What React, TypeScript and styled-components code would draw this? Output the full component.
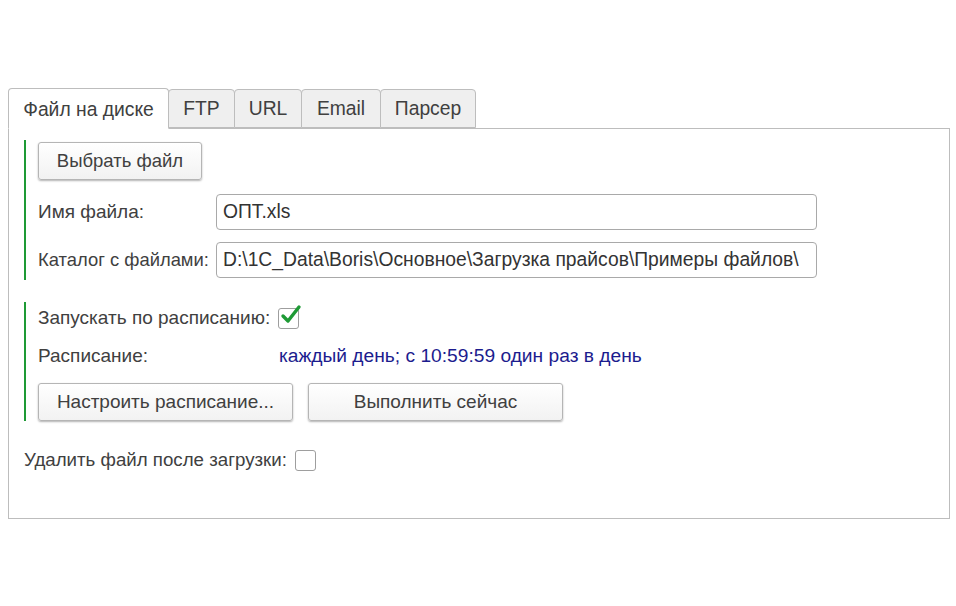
import React from "react";
import styled, { createGlobalStyle } from "styled-components";

const Global = createGlobalStyle`
  html, body { margin: 0; padding: 0; background: #ffffff; }
  body { font-family: Arial, "Liberation Sans", sans-serif; color: #404040; }
`;

const Page = styled.div`
  padding: 88px 6px 0 8px;
  width: 942px;
`;

const TabBar = styled.div`
  display: flex;
  align-items: flex-end;
  height: 40px;
  position: relative;
  z-index: 1;
`;

const Tab = styled.div<{ $active?: boolean; $w: number }>`
  box-sizing: border-box;
  width: ${(p) => p.$w}px;
  height: ${(p) => (p.$active ? 41 : 39)}px;
  margin-bottom: ${(p) => (p.$active ? -1 : 0)}px;
  margin-left: ${(p) => (p.$active ? 0 : -1)}px;
  display: flex;
  align-items: center;
  justify-content: center;
  padding-top: ${(p) => (p.$active ? 2 : 0)}px;
  font-size: 19.3px;
  color: #404040;
  background: ${(p) => (p.$active ? "#ffffff" : "#efefef")};
  border: 1px solid #bdbdbd;
  border-bottom: ${(p) => (p.$active ? "1px solid #ffffff" : "1px solid #bdbdbd")};
  border-radius: 4px 4px 0 0;
`;

const Panel = styled.div`
  box-sizing: border-box;
  height: 391px;
  border: 1px solid #bdbdbd;
  padding: 11px 15px 0 15px;
  display: flex;
  flex-direction: column;
`;

const Group = styled.div<{ $mt?: number }>`
  border-left: 2px solid #1e9a35;
  padding-left: 12px;
  margin-top: ${(p) => p.$mt ?? 0}px;
  display: flex;
  flex-direction: column;
`;

const Button = styled.div<{ $w: number; $mt?: number; $fs?: number }>`
  box-sizing: border-box;
  width: ${(p) => p.$w}px;
  height: 38px;
  margin-top: ${(p) => p.$mt ?? 0}px;
  display: flex;
  align-items: center;
  justify-content: center;
  font-size: ${(p) => p.$fs ?? 19}px;
  color: #404040;
  border: 1px solid #b5b5b5;
  border-radius: 3px;
  background: linear-gradient(#ffffff, #f2f2f2);
  box-shadow: 0 1px 2px rgba(0, 0, 0, 0.3);
`;

const FieldRow = styled.div<{ $mt: number }>`
  display: flex;
  align-items: center;
  margin-top: ${(p) => p.$mt}px;
`;

const Label = styled.div<{ $w?: number; $fs?: number }>`
  width: ${(p) => (p.$w ? `${p.$w}px` : "auto")};
  font-size: ${(p) => p.$fs ?? 19}px;
  color: #404040;
  white-space: nowrap;
`;

const Input = styled.div`
  box-sizing: border-box;
  width: 601px;
  height: 36px;
  border: 1px solid #a9a9a9;
  border-radius: 4px;
  display: flex;
  align-items: center;
  padding-left: 6px;
  font-size: 19.3px;
  color: #333333;
  white-space: nowrap;
  overflow: hidden;
`;

const Row = styled.div<{ $h: number; $mt?: number }>`
  display: flex;
  align-items: center;
  height: ${(p) => p.$h}px;
  margin-top: ${(p) => p.$mt ?? 0}px;
`;

const Box = styled.div`
  box-sizing: border-box;
  width: 21px;
  height: 21px;
  margin-left: 8px;
  border: 1px solid #9e9e9e;
  border-radius: 3px;
  background: #ffffff;
  position: relative;
`;

const CheckMark = styled.svg`
  position: absolute;
  left: 1px;
  top: -5px;
`;

const Schedule = styled.div`
  font-size: 19.2px;
  color: #1c1c8e;
  white-space: nowrap;
`;

const Buttons = styled.div`
  display: flex;
  gap: 15px;
  margin-top: 5px;
`;

const Spacer = styled.div`
  height: 2px;
`;

export default function App() {
  return (
    <>
      <Global />
      <Page>
        <TabBar>
          <Tab $active $w={161}>Файл на диске</Tab>
          <Tab $w={67}>FTP</Tab>
          <Tab $w={68}>URL</Tab>
          <Tab $w={80}>Email</Tab>
          <Tab $w={96}>Парсер</Tab>
        </TabBar>
        <Panel>
          <Group>
            <Button $w={164} $mt={2} $fs={18.5}>Выбрать файл</Button>
            <FieldRow $mt={14}>
              <Label $w={178}>Имя файла:</Label>
              <Input>ОПТ.xls</Input>
            </FieldRow>
            <FieldRow $mt={12}>
              <Label $w={178} $fs={18.4}>Каталог с файлами:</Label>
              <Input>D:\1C_Data\Boris\Основное\Загрузка прайсов\Примеры файлов\</Input>
            </FieldRow>
            <Spacer />
          </Group>
          <Group $mt={22}>
            <Row $h={32}>
              <Label>Запускать по расписанию:</Label>
              <Box>
                <CheckMark width="22" height="22" viewBox="0 0 22 22">
                  <path d="M3 12 L8 17 L19 3" fill="none" stroke="#1e9a35" strokeWidth="3.4" strokeLinecap="round" strokeLinejoin="round" />
                </CheckMark>
              </Box>
            </Row>
            <Row $h={44}>
              <Label $w={241}>Расписание:</Label>
              <Schedule>каждый день; с 10:59:59 один раз в день</Schedule>
            </Row>
            <Buttons>
              <Button $w={255}>Настроить расписание...</Button>
              <Button $w={255}>Выполнить сейчас</Button>
            </Buttons>
          </Group>
          <Row $h={40} $mt={19}>
            <Label $fs={18.7}>Удалить файл после загрузки:</Label>
            <Box />
          </Row>
        </Panel>
      </Page>
    </>
  );
}
